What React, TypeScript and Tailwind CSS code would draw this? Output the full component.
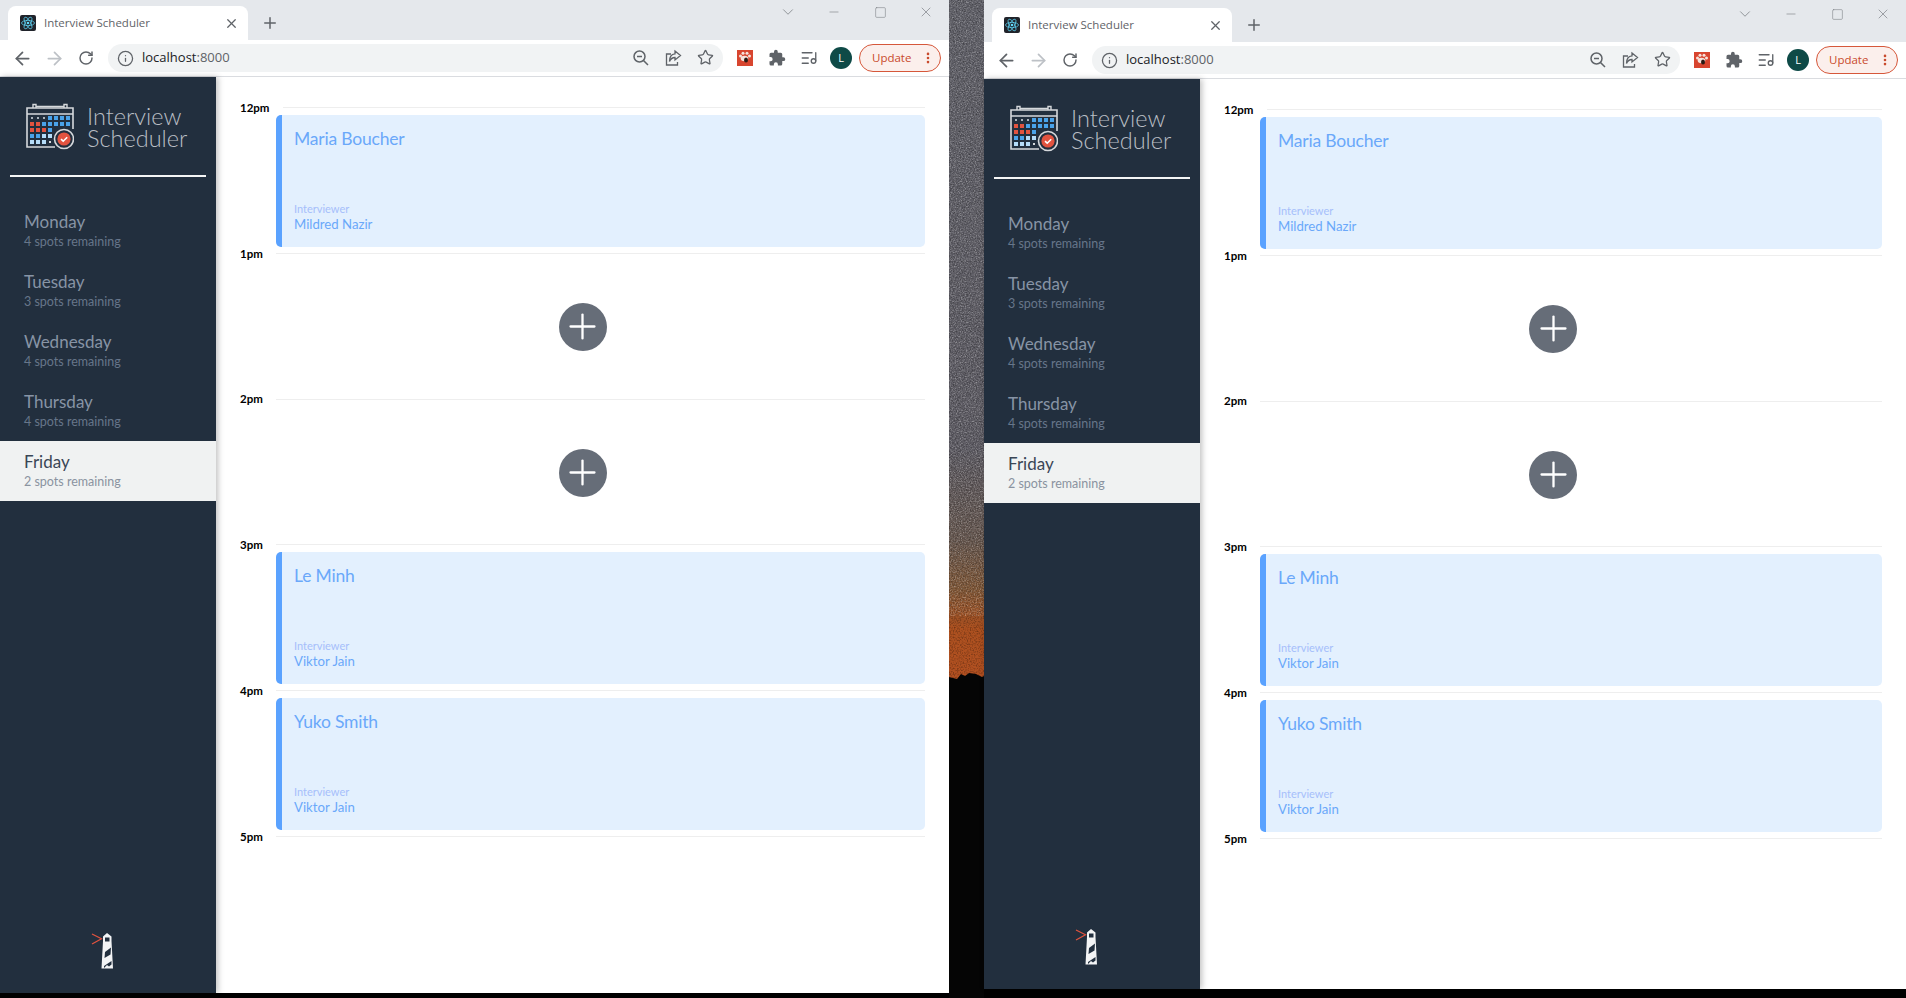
import { ArrowLeft, ArrowRight, Info, ListMusic, RotateCw, Star, X, Plus, Minus, ChevronDown, Square, MoreVertical } from "lucide-react";

const days = [
  { name: "Monday", spots: 4 },
  { name: "Tuesday", spots: 3 },
  { name: "Wednesday", spots: 4 },
  { name: "Thursday", spots: 4 },
  { name: "Friday", spots: 2 },
];

const slots = [
  { time: "12pm", student: "Maria Boucher", interviewer: "Mildred Nazir" },
  { time: "1pm" },
  { time: "2pm" },
  { time: "3pm", student: "Le Minh", interviewer: "Viktor Jain" },
  { time: "4pm", student: "Yuko Smith", interviewer: "Viktor Jain" },
];

const blue = "#4aa3ea";
const red = "#e2533f";
const pale = "#b5dcf8";

// calendar cells: [x, y, colour], centres measured from the logo
const calendarCells: [number, number, string][] = [
  [24, 15, blue], [30, 15, blue], [36, 15, blue], [42, 15, blue],
  [6, 21, red], [12, 21, red], [18, 21, blue], [24, 21, blue], [30, 21, blue], [36, 21, blue], [42, 21, blue],
  [6, 27, red], [12, 27, red], [18, 27, red], [24, 27, blue],
  [6, 33, blue], [12, 33, blue], [18, 33, pale], [24, 33, pale],
  [6, 39, pale], [12, 39, pale], [18, 39, pale],
];

function CalendarLogo() {
  return (
    <svg width="48" height="47" viewBox="0 0 48 47" fill="none" className="shrink-0">
      <path d="M29 44H1V5H47V26" stroke="#d6d9dc" strokeWidth="1.6" />
      <path d="M1 11H47" stroke="#d6d9dc" strokeWidth="1.6" />
      <path d="M7 5V1.5H10V5M38 5V1.5H41V5M10 3.5H38" stroke="#d6d9dc" strokeWidth="1.4" />
      {[6, 12, 18].map((x) => (
        <rect key={x} x={x - 1} y={14} width="2" height="2" fill="#aab2bb" />
      ))}
      <rect x={23} y={38} width="2" height="2" fill="#d6d9dc" />
      {calendarCells.map(([x, y, c]) => (
        <rect key={`${x}-${y}`} x={x - 2} y={y - 2} width="4" height="4" fill={c} />
      ))}
      <circle cx="38" cy="36" r="9.5" fill="#222f3e" stroke="#d6d9dc" strokeWidth="1.6" />
      <circle cx="38" cy="36" r="6.6" fill={red} />
      <path d="M35 36.2L37.2 38.2L41.2 34.2" stroke="#fff" strokeWidth="1.6" />
    </svg>
  );
}

function Lighthouse() {
  return (
    <svg width="36" height="36" viewBox="0 0 36 36" fill="none">
      <path d="M2 1L11.5 5.8L2 11" stroke="#e2533f" strokeWidth="1.2" />
      <path d="M17 0L21.5 3.5V8L23 35.5H11.5L13 8V3.5Z" fill="#f3f4f5" />
      <rect x="15" y="4.5" width="4.5" height="4" fill="#222f3e" />
      <path d="M15 19L21 14.5L20.5 21.5L14.5 25Z" fill="#222f3e" />
      <path d="M14 33L21.5 28V31.5L19 33.5L17 32L14 35Z" fill="#222f3e" />
    </svg>
  );
}

function ReactFavicon() {
  return (
    <svg width="16" height="16" viewBox="0 0 16 16" fill="none" className="shrink-0">
      <rect width="16" height="16" rx="2" fill="#20232a" />
      <circle cx="8" cy="8" r="1.3" fill="#61dafb" />
      <g stroke="#61dafb" strokeWidth="0.7">
        <ellipse cx="8" cy="8" rx="6.5" ry="2.6" />
        <ellipse cx="8" cy="8" rx="6.5" ry="2.6" transform="rotate(60 8 8)" />
        <ellipse cx="8" cy="8" rx="6.5" ry="2.6" transform="rotate(120 8 8)" />
      </g>
    </svg>
  );
}

function ZoomOutIcon() {
  return (
    <svg width="18" height="18" viewBox="0 0 18 18" fill="none" stroke="#5f6368" strokeWidth="1.5">
      <circle cx="7.5" cy="7.5" r="5.5" />
      <path d="M5 7.5H10M11.5 11.5L16 16" />
    </svg>
  );
}

function ShareIcon() {
  return (
    <svg width="18" height="18" viewBox="0 0 18 18" fill="none" stroke="#5f6368" strokeWidth="1.3">
      <path d="M7 5H2.5V16H13.5V13" />
      <path d="M11 2L16.5 6.5L11 11V8.5C8 8.5 6.5 10 5.5 12.5C5.5 8 7.5 5 11 4.8Z" />
    </svg>
  );
}

function PuzzleIcon() {
  return (
    <svg width="18" height="18" viewBox="0 0 24 24" fill="#5f6368">
      <path d="M20.5 11H19V7a2 2 0 0 0-2-2h-4V3.5a2.5 2.5 0 0 0-5 0V5H4a2 2 0 0 0-2 2v3.8h1.5a2.7 2.7 0 0 1 0 5.4H2V20a2 2 0 0 0 2 2h3.8v-1.5a2.7 2.7 0 0 1 5.4 0V22H17a2 2 0 0 0 2-2v-4h1.5a2.5 2.5 0 0 0 0-5z" />
    </svg>
  );
}

function BugExtension() {
  return (
    <svg width="16" height="16" viewBox="0 0 16 16">
      <rect width="16" height="16" fill="#d8452f" />
      <circle cx="3.5" cy="6" r="1.5" fill="#f6e3dc" />
      <circle cx="6" cy="3.2" r="1.5" fill="#f6e3dc" />
      <circle cx="10" cy="3.2" r="1.5" fill="#f6e3dc" />
      <circle cx="12.5" cy="6" r="1.5" fill="#f6e3dc" />
      <ellipse cx="7.5" cy="8.5" rx="3.8" ry="2.8" fill="#f6e3dc" />
      <ellipse cx="9" cy="10" rx="2" ry="2.6" fill="#2b1a14" />
    </svg>
  );
}

function Wallpaper() {
  return (
    <svg width="35" height="998" viewBox="0 0 35 998" className="block shrink-0">
      <defs>
        <linearGradient id="sky" x1="0" y1="0" x2="0" y2="1">
          <stop offset="0" stopColor="#5f5f67" />
          <stop offset="0.45" stopColor="#5c5a62" />
          <stop offset="0.54" stopColor="#65564e" />
          <stop offset="0.59" stopColor="#7d5535" />
          <stop offset="0.63" stopColor="#ad5120" />
          <stop offset="0.68" stopColor="#b25021" />
        </linearGradient>
        <filter id="grain">
          <feTurbulence type="fractalNoise" baseFrequency="0.8" numOctaves="2" />
          <feColorMatrix values="0 0 0 0 1 0 0 0 0 1 0 0 0 0 1 2.4 0 0 0 -1.05" />
        </filter>
        <filter id="grainDark">
          <feTurbulence type="fractalNoise" baseFrequency="0.7" numOctaves="2" seed="7" />
          <feColorMatrix values="0 0 0 0 0 0 0 0 0 0 0 0 0 0 0 2.4 0 0 0 -1.05" />
        </filter>
      </defs>
      <rect width="35" height="998" fill="url(#sky)" />
      <rect width="35" height="560" filter="url(#grain)" opacity="0.35" />
      <rect width="35" height="660" filter="url(#grainDark)" opacity="0.35" />
      <path d="M0 677L8 679L12 674L16 676L20 673L27 674L33 677L35 676V998H0Z" fill="#050505" />
    </svg>
  );
}

function Toolbar() {
  return (
    <div className="flex items-center h-9 bg-white">
      <div className="flex items-center ml-[6px]">
        <span className="w-8 flex justify-center"><ArrowLeft size={21} color="#5f6368" strokeWidth={2} /></span>
        <span className="w-8 flex justify-center"><ArrowRight size={21} color="#bdc1c6" strokeWidth={2} /></span>
        <span className="w-8 flex justify-center"><RotateCw size={16} color="#5f6368" strokeWidth={2.2} /></span>
      </div>
      <div className="flex-1 h-7 ml-[6px] flex items-center rounded-full bg-[#f1f3f4] pl-[9px] pr-[2px]">
        <Info size={17} color="#5f6368" strokeWidth={1.8} />
        <span className="ml-[8px] text-[13px] text-[#202124]">
          localhost<span className="text-[#5f6368]">:8000</span>
        </span>
        <div className="ml-auto flex">
          <span className="w-8 flex justify-center"><ZoomOutIcon /></span>
          <span className="w-8 flex justify-center"><ShareIcon /></span>
          <span className="w-8 flex justify-center"><Star size={17} color="#5f6368" strokeWidth={1.8} /></span>
        </div>
      </div>
      <div className="flex items-center ml-[6px]">
        <span className="w-8 flex justify-center"><BugExtension /></span>
        <span className="w-8 flex justify-center"><PuzzleIcon /></span>
        <span className="w-8 flex justify-center"><ListMusic size={18} color="#5f6368" strokeWidth={1.8} /></span>
        <span className="w-8 flex justify-center">
          <span className="w-[22px] h-[22px] rounded-full bg-[#0e4a47] text-white text-[11px] flex items-center justify-center">L</span>
        </span>
      </div>
      <div className="ml-[2px] mr-[8px] w-[82px] h-7 rounded-full border border-[#d6573a] bg-[#fbefec] text-[#c9492b] text-[11.5px] flex items-center justify-between pl-[12px] pr-[5px]">
        Update
        <MoreVertical size={14} color="#c9492b" strokeWidth={2.5} />
      </div>
    </div>
  );
}

function Appointment({ student, interviewer }: { student: string; interviewer: string }) {
  return (
    <div className="ml-9 h-[132px] flex flex-col justify-between rounded-[5px] border-l-[6px] border-[#5aa2ff] bg-[#e3f0fe] pl-3 pt-[11px] pb-[14px]">
      <div className="text-[17.5px] leading-[26px] tracking-[-0.2px] text-[#6aa8fa]">{student}</div>
      <div>
        <div className="text-[11px] leading-[13px] text-[#a6bffb]">Interviewer</div>
        <div className="text-[13.2px] leading-[18px] text-[#6aa8fa]">{interviewer}</div>
      </div>
    </div>
  );
}

function AddSlot() {
  return (
    <div className="h-[132px] flex items-center justify-center">
      <div className="w-12 h-12 rounded-full bg-[#666d78] flex items-center justify-center">
        <Plus size={41} color="#fff" strokeWidth={1.35} />
      </div>
    </div>
  );
}

function Scheduler() {
  return (
    <div className="flex flex-1 min-h-0" style={{ fontFamily: "Lato, sans-serif" }}>
      <nav className="relative z-10 w-[216px] shrink-0 flex flex-col bg-[#222f3e] shadow-[2px_0_6px_rgba(0,0,0,0.25)]">
        <div className="flex items-center pt-[26px] pl-[26px]">
          <CalendarLogo />
          <div className="ml-[13px] text-[23.5px] leading-[22px] font-light text-[#b9bec4]">
            Interview<br />Scheduler
          </div>
        </div>
        <hr className="mx-[10px] mt-[25px] border-0 h-[2px] bg-[#f4f5f5]" />
        <ul className="mt-[24px]">
          {days.map((d) => {
            const selected = d.name === "Friday";
            return (
              <li key={d.name} className={selected ? "h-[60px] pl-6 pt-[9px] bg-[#f0f2f2]" : "h-[60px] pl-6 pt-[9px]"}>
                <div className={selected ? "text-[17px] leading-6 text-[#3a4656]" : "text-[17px] leading-6 text-[#8794a5]"}>{d.name}</div>
                <div className={selected ? "text-[12.5px] leading-[15px] text-[#8a93a0]" : "text-[12.5px] leading-[15px] text-[#67768a]"}>{d.spots} spots remaining</div>
              </li>
            );
          })}
        </ul>
        <div className="mt-auto pb-6 flex justify-center">
          <Lighthouse />
        </div>
      </nav>
      <main className="flex-1 min-w-0 bg-white pt-[30px] pl-6 pr-6">
        {slots.map((s) => (
          <article key={s.time} className="h-[145.8px]">
            <header className="h-px flex items-center">
              <h4 className="text-[11.5px] font-bold text-black">{s.time}</h4>
              <hr className="flex-1 ml-[13px] border-0 h-px bg-[#eeeeee]" />
            </header>
            <div className="pt-[7px]">
              {s.student ? <Appointment student={s.student} interviewer={s.interviewer!} /> : <AddSlot />}
            </div>
          </article>
        ))}
        <header className="h-px flex items-center">
          <h4 className="text-[11.5px] font-bold text-black">5pm</h4>
          <hr className="flex-1 ml-[13px] border-0 h-px bg-[#eeeeee]" />
        </header>
      </main>
    </div>
  );
}

function BrowserWindow({ className }: { className: string }) {
  return (
    <div className={className} style={{ fontFamily: "'Open Sans', sans-serif" }}>
      <div className="flex h-10 pt-[6px] pl-2 bg-[#e5e8ec]">
        <div className="w-[240px] flex items-center rounded-t-lg bg-white pl-3 pr-[9px]">
          <ReactFavicon />
          <span className="ml-2 text-[11.5px] text-[#5f6368]">Interview Scheduler</span>
          <X size={15} color="#5f6368" strokeWidth={2} className="ml-auto" />
        </div>
        <span className="ml-2 w-7 flex items-center justify-center">
          <Plus size={18} color="#5f6368" strokeWidth={2} />
        </span>
        <div className="ml-auto flex -mt-[6px] h-6 items-center text-[#75797e]">
          <span className="w-[46px] flex justify-center"><ChevronDown size={18} strokeWidth={1} /></span>
          <span className="w-[46px] flex justify-center"><Minus size={14} strokeWidth={1} /></span>
          <span className="w-[46px] flex justify-center"><Square size={13} strokeWidth={1} /></span>
          <span className="w-[46px] flex justify-center"><X size={16} strokeWidth={1} /></span>
        </div>
      </div>
      <Toolbar />
      <div className="h-px bg-[#dadce0]" />
      <Scheduler />
    </div>
  );
}

export default function App() {
  return (
    <div className="flex w-[1906px] h-[998px] overflow-hidden bg-black">
      <BrowserWindow className="w-[949px] h-[993px] shrink-0 flex flex-col" />
      <Wallpaper />
      <BrowserWindow className="flex-1 min-w-0 h-[989px] pt-[2px] bg-[#e5e8ec] flex flex-col" />
    </div>
  );
}
